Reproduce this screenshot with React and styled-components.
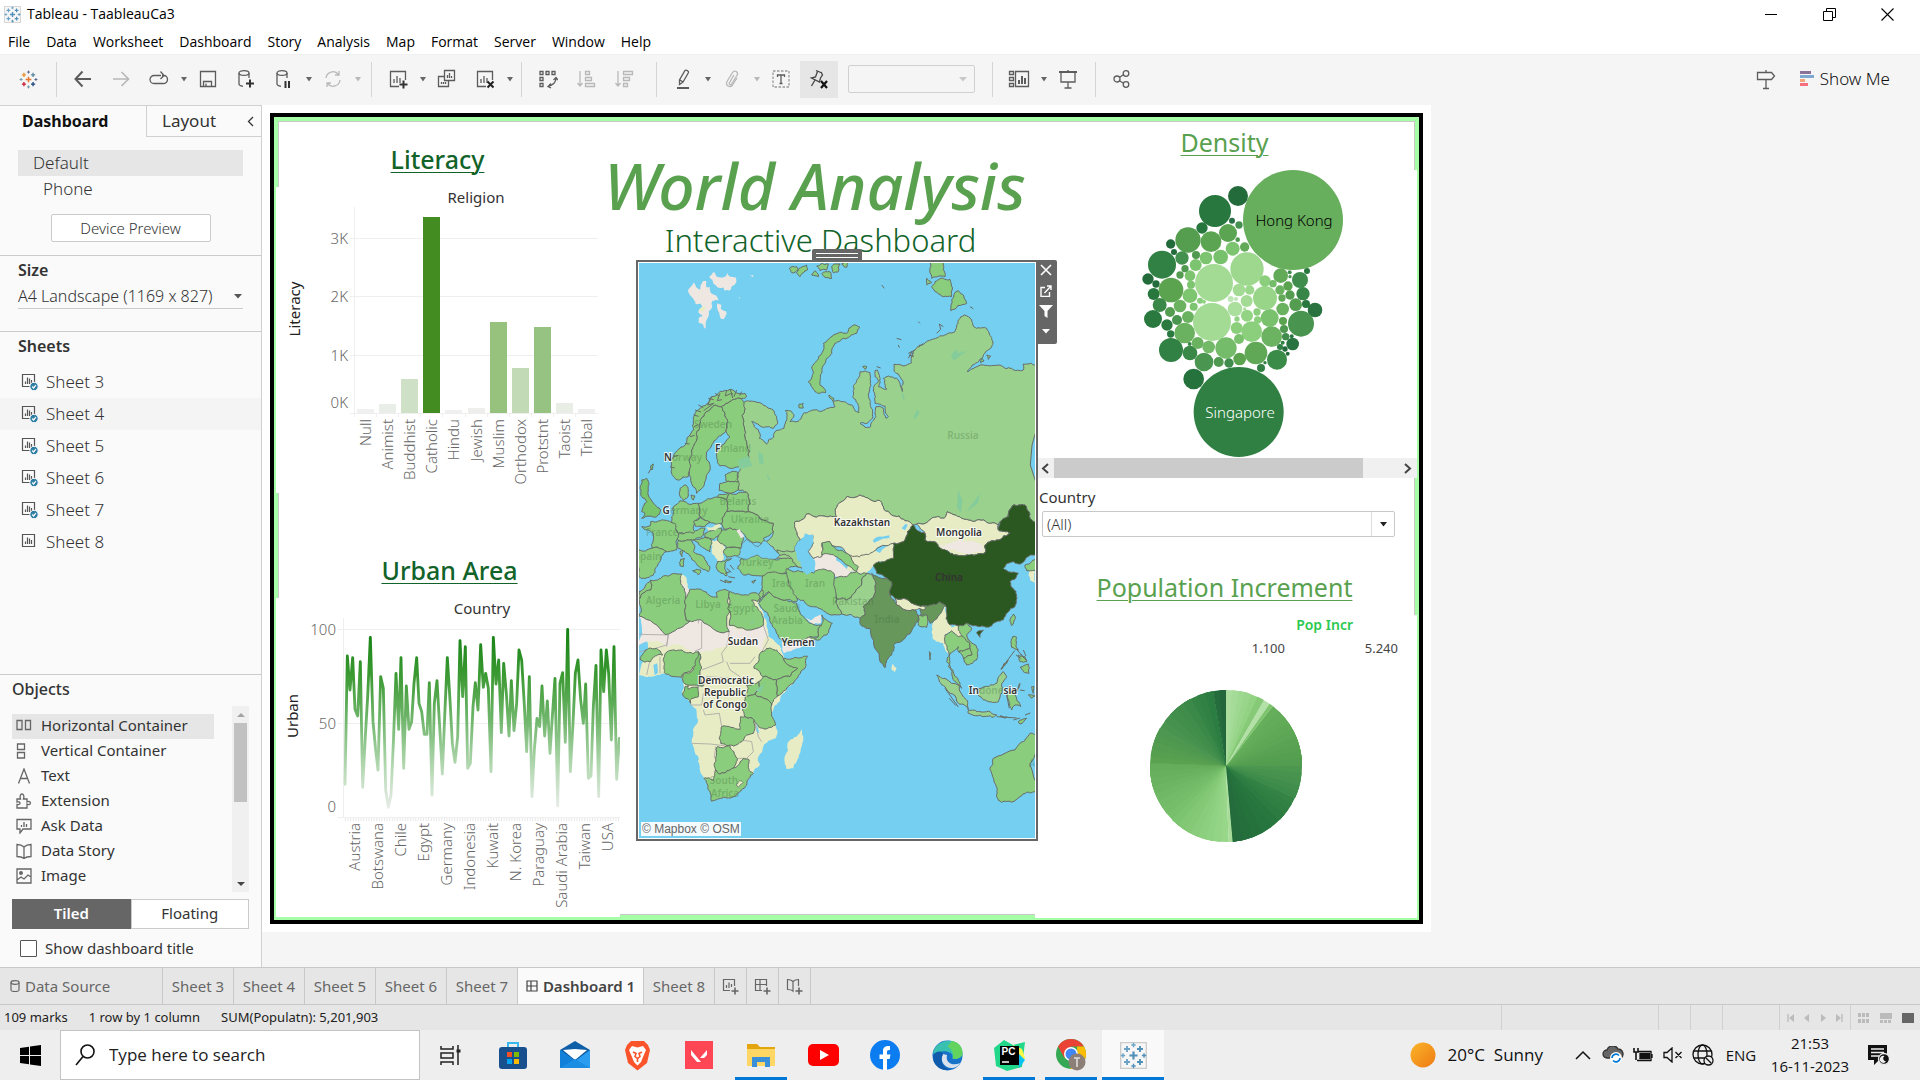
import React from "react";
import styled, { createGlobalStyle, css } from "styled-components";

const UI = `"Noto Sans", "Open Sans", sans-serif`;
const SYS = `"Open Sans", "Noto Sans", sans-serif`;

const GlobalStyle = createGlobalStyle`
  *, *::before, *::after { box-sizing: border-box; }
  body { margin: 0; background: #f5f5f5; font-family: ${UI}; color: #333; overflow: hidden; }
  button, select, input { font: inherit; color: inherit; }
  button { border: 0; padding: 0; background: none; cursor: pointer; }
  h1, h2, h3, p, ul { margin: 0; padding: 0; font-weight: 400; }
  svg { display: block; flex: none; }
`;

/* ---------- shell ---------- */
const Window = styled.div`
  display: flex;
  flex-direction: column;
  height: 100vh;
`;
const TitleBar = styled.header`
  display: flex;
  align-items: center;
  height: 28px;
  padding: 0 4px;
  background: #fff;
  color: #000;
  font: 14px/28px ${SYS};
`;
const TitleText = styled.h1`
  flex: 1;
  margin-left: 6px;
  font: inherit;
`;
const WindowButton = styled.button`
  width: 58px;
  height: 28px;
  display: grid;
  place-items: center;
`;
const MenuBar = styled.nav`
  display: flex;
  gap: 16px;
  height: 26px;
  padding-left: 8px;
  background: #fff;
`;
const MenuItem = styled.button`
  font: 14px/28px ${SYS};
  color: #000;
`;
const Toolbar = styled.div`
  display: flex;
  align-items: center;
  height: 51px;
  padding: 0 0 2px 9px;
  border-top: 1px solid #f0f0f0;
  background: #f5f5f5;
`;
const Tool = styled.button`
  width: 38px;
  height: 37px;
  display: grid;
  place-items: center;
  color: ${(p) => (p.$off ? "#b8b8b8" : "#5c5c5c")};
  background: ${(p) => (p.$on ? "#e6e6e6" : "transparent")};
`;
const CaretButton = styled.button`
  width: 11px;
  height: 37px;
  display: grid;
  place-items: center;
  color: ${(p) => (p.$off ? "#b8b8b8" : "#666")};
`;
const Separator = styled.span`
  width: 1px;
  height: 35px;
  margin-left: ${(p) => p.$before}px;
  margin-right: 7px;
  background: #d4d4d4;
`;
const SelectShell = styled.div`
  position: relative;
  width: ${(p) => (p.$width ? p.$width + "px" : "auto")};
  margin-left: ${(p) => p.$left || 0}px;
  svg { position: absolute; right: ${(p) => p.$inset || 6}px; top: 50%; margin-top: -2px; pointer-events: none; }
`;
const FitSelect = styled.select`
  appearance: none;
  width: 100%;
  height: 28px;
  border: 1px solid #d0d0d0;
  border-radius: 2px;
  background: #f5f5f5;
`;
const Spacer = styled.span`
  flex: 1;
`;
const ShowMe = styled.button`
  display: flex;
  align-items: center;
  gap: 6px;
  padding: 0 30px 0 15px;
  color: #111;
  font: 300 17px/24px ${UI};
`;
const Body = styled.div`
  display: flex;
  flex: 1;
  min-height: 0;
`;

/* ---------- side pane ---------- */
const Side = styled.aside`
  display: flex;
  flex-direction: column;
  width: 262px;
  border-right: 1px solid #d0d0d0;
  background: #fafafa;
`;
const SideTabs = styled.div`
  display: flex;
  height: 32px;
  border-top: 1px solid #d0d0d0;
`;
const SideTab = styled.button`
  width: ${(p) => (p.$active ? "146px" : "auto")};
  flex: ${(p) => (p.$active ? "none" : 1)};
  padding: 0 ${(p) => (p.$active ? 12 : 7)}px ${(p) => (p.$active ? 2 : 0)}px ${(p) => (p.$active ? 22 : 15)}px;
  display: flex;
  align-items: center;
  justify-content: space-between;
  font: ${(p) => (p.$active ? "700 16px" : "400 17px")}/28px ${UI};
  color: ${(p) => (p.$active ? "#111" : "#333")};
  ${(p) => !p.$active && css`border-left: 1px solid #d0d0d0; border-bottom: 1px solid #d0d0d0;`}
`;
const Devices = styled.section`
  padding: 13px 18px 12px;
  height: 118px;
`;
const Device = styled.button`
  display: block;
  width: 100%;
  height: 26px;
  padding-left: ${(p) => (p.$child ? 25 : 15)}px;
  text-align: left;
  font: 300 17px/26px ${UI};
  background: ${(p) => (p.$active ? "#e6e6e6" : "transparent")};
`;
const Preview = styled.button`
  display: block;
  width: 160px;
  height: 28px;
  margin: 12px auto 0;
  border: 1px solid #cbcbcb;
  border-radius: 2px;
  background: #fff;
  font: 300 15px/26px ${UI};
`;
const SizeBox = styled.section`
  height: 76px;
  padding: 1px 18px 0;
  border-top: 1px solid #cbcbcb;
`;
const Heading = styled.h2`
  font: 600 16px/26px ${UI};
  color: #333;
`;
const SizeSelect = styled.select`
  appearance: none;
  width: 100%;
  height: 26px;
  border: 0;
  border-bottom: 1px solid #cbcbcb;
  background: transparent;
  font: 300 16px/24px ${UI};
  padding: 0;
`;
const Sheets = styled.section`
  flex: 1;
  border-top: 1px solid #cbcbcb;
  ${Heading} { padding: 1px 18px 6px; height: 34px; }
`;
const SheetRow = styled.button`
  display: flex;
  align-items: center;
  gap: 7px;
  width: 100%;
  height: 32px;
  padding-left: 21px;
  font: 300 17px/32px ${UI};
  background: ${(p) => (p.$hover ? "#f4f4f4" : "transparent")};
`;
const Objects = styled.section`
  padding: 1px 12px 9px;
  border-top: 1px solid #cbcbcb;
  height: 293px;
  ${Heading} { font-weight: 500; }
`;
const ObjectPane = styled.div`
  display: flex;
  justify-content: space-between;
  height: 186px;
  margin-top: 4px;
`;
const ObjectList = styled.div`
  width: 202px;
  padding-top: 8px;
`;
const ObjectItem = styled.button`
  display: flex;
  align-items: center;
  gap: 9px;
  width: 100%;
  height: 25px;
  padding: 0 0 2px 4px;
  text-align: left;
  font: 400 15px/23px ${UI};
  color: #333;
  background: ${(p) => (p.$active ? "#e6e6e6" : "transparent")};
  svg { color: #666; }
`;
const VScroll = styled.div`
  display: flex;
  flex-direction: column;
  align-items: center;
  width: 17px;
  background: #f0f0f0;
  button { height: 17px; width: 17px; display: grid; place-items: center; }
  span { width: 13px; height: 79px; background: #c1c1c1; margin-bottom: auto; }
`;
const Modes = styled.div`
  display: flex;
  margin-top: 7px;
  height: 30px;
`;
const Mode = styled.button`
  flex: 1;
  padding-bottom: 3px;
  border: 1px solid ${(p) => (p.$active ? "#666" : "#cbcbcb")};
  background: ${(p) => (p.$active ? "#666" : "#fff")};
  color: ${(p) => (p.$active ? "#fff" : "#333")};
  font: ${(p) => (p.$active ? 600 : 400)} 15px/24px ${UI};
`;
const CheckRow = styled.label`
  display: flex;
  align-items: center;
  gap: 8px;
  margin: 7px 0 0 8px;
  height: 24px;
  font: 400 15px/24px ${UI};
  input { appearance: none; margin: 0; width: 17px; height: 17px; border: 1px solid #555; border-radius: 1px; background: #fff; }
`;

/* ---------- dashboard ---------- */
const Workspace = styled.main`
  flex: 1;
  min-width: 0;
  overflow: hidden;
`;
const Page = styled.div`
  width: 1169px;
  height: 827px;
  padding: 8px;
  background: #fff;
`;
const Frame = styled.div`
  height: 100%;
  border: 4px solid #000;
  background: #a6ffa6;
  padding-top: 4px;
`;
const Columns = styled.div`
  display: grid;
  grid-template-columns: 346px 415px 1fr;
  height: 100%;
`;
const Column = styled.div`
  display: flex;
  flex-direction: column;
  min-width: 0;
`;
const Tile = styled.section`
  height: ${(p) => p.$h}px;
  background: #fff;
  ${(p) => p.$edge === "left" && css`margin-left: ${p.$framed ? 4 : 2}px;`}
  ${(p) => p.$edge === "right" && css`margin-right: ${p.$framed ? 4 : 2}px;`}
  ${(p) => p.$framed && css`border-${p.$edge}: 1px solid #c8c8c8;`}
  ${(p) => p.$top && css`border-top: 1px solid #c8c8c8;`}
  padding-top: ${(p) => p.$pad || 0}px;
  padding-right: ${(p) => p.$right || 0}px;
`;
const Title = styled.h2`
  text-align: center;
  text-decoration: underline;
  text-decoration-thickness: 1px;
  text-underline-offset: 3px;
  font: ${(p) => (p.$dark ? 500 : 400)} 25px/36px ${UI};
  color: ${(p) => (p.$dark ? "#116329" : "#59a14f")};
`;
const Middle = styled.section`
  height: 794px;
  padding: 26px 0 0 16px;
  border-top: 1px solid #c8c8c8;
  border-bottom: 1px solid #c8c8c8;
  background: #fff;
`;
const Headline = styled.h1`
  font: italic 500 64px/76px ${UI};
  color: #59a14f;
  white-space: nowrap;
  margin-left: -32px;
`;
const Subtitle = styled.h2`
  height: 36px;
  font: 300 31px/32px ${UI};
  color: #116329;
  text-align: center;
  padding-right: 30px;
`;
const MapTile = styled.div`
  position: relative;
  z-index: 1;
  width: 402px;
  height: 581px;
  border: 2px solid #666;
  padding: 1px;
  background: #fff;
`;
const Grip = styled.div`
  position: absolute;
  left: 174px;
  top: -13px;
  width: 50px;
  height: 12px;
  padding: 4px;
  border-radius: 2px 2px 0 0;
  background: #666;
  &::before { content: ""; display: block; height: 5px; border: 1px solid #fff; border-width: 1px 0; }
`;
const MapTools = styled.div`
  position: absolute;
  left: 398px;
  top: -2px;
  width: 21px;
  height: 84px;
  padding: 0 2px 2px 0;
  background: #666;
  border-radius: 0 2px 2px 0;
  display: flex;
  flex-direction: column;
  color: #fff;
  button { flex: 1; display: grid; place-items: center; }
`;
const Credit = styled.p`
  position: absolute;
  left: 3px;
  bottom: 3px;
  padding: 0 1px;
  background: rgba(255, 255, 255, 0.92);
  color: #666;
  font: 12px/14px "Liberation Sans", Arial, sans-serif;
`;
const AxisText = styled.text`
  font: ${(p) => p.$weight || 300} ${(p) => p.$size || 15}px ${UI};
  fill: ${(p) => p.$fill || "#666"};
`;
const MapText = styled.text`
  font: 600 10px ${UI};
  fill: #333;
  text-anchor: middle;
`;
const MapLetters = styled.tspan`
  fill: ${(p) => (p.$faint ? "rgba(60,105,60,0.3)" : "#333")};
  ${(p) => !p.$faint && css`paint-order: stroke; stroke: rgba(255,255,255,.8); stroke-width: 2px;`}
`;
const HScroll = styled.div`
  display: flex;
  height: 20px;
  background: #f0f0f0;
  button { width: 19px; display: grid; place-items: center; color: #444; }
  span { width: 309px; background: #cbcbcb; margin-right: auto; }
`;
const FilterLabel = styled.label`
  display: block;
  padding-left: 4px;
  font: 400 15px/24px ${UI};
`;
const FilterShell = styled(SelectShell)`
  margin: 2px 0 32px 7px;
  width: 353px;
  height: 26px;
`;
const FilterSelect = styled.select`
  appearance: none;
  width: 100%;
  height: 26px;
  padding: 0 4px;
  border: 1px solid #c8c8c8;
  border-radius: 2px;
  background: linear-gradient(#ddd, #ddd) right 22px top / 1px 100% no-repeat #fff;
  font: 300 15px/24px ${UI};
`;

/* ---------- bottom bars ---------- */
const SheetTabs = styled.nav`
  display: flex;
  height: 37px;
  border-top: 1px solid #c8c8c8;
  background: #e6e6e6;
`;
const SheetTab = styled.button`
  display: flex;
  align-items: center;
  justify-content: ${(p) => (p.$start ? "flex-start" : "center")};
  gap: 5px;
  padding-left: ${(p) => (p.$start ? 10 : 0)}px;
  width: ${(p) => p.$w}px;
  border-right: 1px solid #c8c8c8;
  background: ${(p) => (p.$active ? "#fafafa" : "transparent")};
  font: ${(p) => (p.$active ? 600 : 400)} 15px/36px ${UI};
  color: ${(p) => (p.$active ? "#444" : "#666")};
`;
const Status = styled.footer`
  display: flex;
  height: 26px;
  padding-left: 4px;
  border-top: 1px solid #c8c8c8;
  background: #e6e6e6;
  font: 13px/25px ${UI};
  color: #222;
`;
const StatusText = styled.span`
  margin-right: 21px;
`;
const StatusCell = styled.span`
  display: flex;
  align-items: center;
  justify-content: center;
  gap: ${(p) => p.$gap || 8}px;
  width: ${(p) => p.$w}px;
  border-left: 1px solid #d0d0d0;
  color: #bbb;
`;
const Taskbar = styled.footer`
  display: flex;
  height: 50px;
  background: #eeeeef;
  color: #111;
  font-family: ${SYS};
`;
const StartButton = styled.button`
  width: 60px;
  display: grid;
  place-items: center;
`;
const Search = styled.label`
  display: flex;
  align-items: center;
  gap: 14px;
  width: 360px;
  padding-left: 14px;
  border: 1px solid #c4c4c4;
  background: #fff;
  input { width: 260px; border: 0; outline: 0; padding: 0; background: none; font: 17px/24px ${SYS}; }
  input::placeholder { color: #222; opacity: 1; }
`;
const TaskApp = styled.button`
  width: 62px;
  display: grid;
  place-items: center;
  background: ${(p) => (p.$active ? "#f9f9f9" : "transparent")};
  background-image: ${(p) => (p.$open ? "linear-gradient(#0078d7, #0078d7)" : "none")};
  background-size: ${(p) => (p.$active ? "100%" : "52px")} 3px;
  background-position: bottom center;
  background-repeat: no-repeat;
`;
const Tray = styled.div`
  display: flex;
  align-items: center;
  padding-right: 26px;
  font: 16px/24px ${SYS};
`;
const TrayButton = styled.button`
  width: 30px;
  height: 50px;
  display: grid;
  place-items: center;
`;
const Weather = styled.button`
  display: flex;
  align-items: center;
  gap: 12px;
  margin-right: 25px;
  font: 17px/24px ${SYS};
  white-space: pre;
`;
const Lang = styled.span`
  width: 46px;
  text-align: center;
  font: 15px/24px ${SYS};
`;
const Clock = styled.time`
  width: 92px;
  margin-right: 8px;
  text-align: center;
  font: 15px/23px ${SYS};
`;

/* ---------- icons ---------- */
const Ico = ({ w = 20, h = 20, sw = 1.3, children, ...rest }) => (
  <svg width={w} height={h} viewBox={`0 0 ${w} ${h}`} fill="none" stroke="currentColor" strokeWidth={sw} aria-hidden="true" {...rest}>{children}</svg>
);
const Down = ({ s = 6, color = "currentColor" }) => (
  <svg width={s} height={5} viewBox="0 0 6 5" aria-hidden="true" preserveAspectRatio="none"><path d="M0 0h6L3 4.4z" fill={color} /></svg>
);
const plusPath = (x, y, r) => `M${x - r} ${y}H${x + r}M${x} ${y - r}V${y + r}`;
const TableauMark = ({ size = 18, blue, boxed }) => {
  const c = blue
    ? ["#4f8fb8", "#4f8fb8", "#6aa3c7", "#6aa3c7", "#4f8fb8", "#6aa3c7", "#4f8fb8", "#6aa3c7", "#4f8fb8"]
    : ["#e8762c", "#59879b", "#c72035", "#eb912c", "#1f447e", "#5b6591", "#7099a5", "#7099a5", "#5b6591"];
  return (
    <svg width={size} height={size} viewBox="0 0 20 20" fill="none" aria-hidden="true">
      {boxed && <path d="M.5.5h19v19H.5z" fill="#f6f6f6" stroke="#ccc" />}
      <path d={plusPath(10, 10, 3)} stroke={c[0]} strokeWidth="1.6" />
      <path d={plusPath(14.8, 5.2, 2.2)} stroke={c[1]} strokeWidth="1.4" />
      <path d={plusPath(5.2, 14.8, 2.2)} stroke={c[2]} strokeWidth="1.4" />
      <path d={plusPath(5.2, 5.2, 2.2)} stroke={c[3]} strokeWidth="1.4" />
      <path d={plusPath(14.8, 14.8, 2.2)} stroke={c[4]} strokeWidth="1.4" />
      <path d={plusPath(10, 2.2, 1.6)} stroke={c[5]} />
      <path d={plusPath(10, 17.8, 1.6)} stroke={c[6]} />
      <path d={plusPath(2.2, 10, 1.6)} stroke={c[7]} />
      <path d={plusPath(17.8, 10, 1.6)} stroke={c[8]} />
    </svg>
  );
};
const icons = {
  back: <Ico sw={2}><path d="M18 10H3M9.500 2.500 2.500 10l7 7.500" /></Ico>,
  forward: <Ico sw={1.7}><path d="M2 10h15M10.500 3l7 7-7 7" /></Ico>,
  redo: <Ico><path d="M12 6.500H5a4 4 0 0 0 0 8h9a4 4 0 0 0 4.500-4c0-2-1.500-4-3.500-4h-2M11.500 2.500 15 6.500l-3.500 3.500" /></Ico>,
  save: <Ico><path d="M2.500 2.500h15v15h-15zM5.500 17.500v-5h8v5M8 17.500v-3" /></Ico>,
  dbPlus: <Ico><ellipse cx="8" cy="4" rx="5" ry="2.400" /><path d="M3 4v11c0 1.300 2 2 4 2.300M13 4v5" /><path d="M10 14.500h8M14 10.500v8" strokeWidth="2" stroke="#333" /></Ico>,
  dbPause: <Ico><ellipse cx="8" cy="4" rx="5" ry="2.400" /><path d="M3 4v11c0 1.300 2 2 4 2.300M13 4v5" /><path d="M11.500 12v7M15 12v7" strokeWidth="2" stroke="#333" /></Ico>,
  refresh: <Ico><path d="M3 9a7 7 0 0 1 12.500-3.500M17 11a7 7 0 0 1-12.500 3.500M16 2v4h-4M4 18v-4h4" /></Ico>,
  newSheet: <Ico><path d="M11 17.500H2.500v-15h15V11M6 14v-4M9 14V7M12 14V9" /><path d="M11.500 15.500h8M15.500 11.500v8" strokeWidth="2" stroke="#333" /></Ico>,
  dup: <Ico><path d="M7.500 1.500h10v10h-10zM7.500 7.500h-6v10h10v-6M10.500 9V6M12.500 9V4M14.500 9V7M4.500 15v-2M6.500 15v-2M8.500 15v-2" /></Ico>,
  clear: <Ico><path d="M11 17.500H2.500v-15h15V11M6 14v-4M9 14V7M12 14V9" /><path d="m12.500 12.500 6 6M18.500 12.500l-6 6" strokeWidth="2" stroke="#222" /></Ico>,
  swap: <Ico><path d="M2 2.500h3v3H2zM8 2.500h3v3H8zM14 2.500h3v3h-3zM2 8.500h3v3H2zM2 14.500h3v3H2zM18 9c0 5-3 7-8 8.500M15.500 11 18 8.500l2 2.500M13 14.500l-3 3 3 1.500" /></Ico>,
  sortAsc: <Ico><path d="M4 2v15M1.500 14 4 17l2.500-3M9.500 2.500h4v3h-4zM9.500 8.500h6v3h-6zM9.500 14.500h9v3h-9z" /></Ico>,
  sortDesc: <Ico><path d="M4 2v15M1.500 14 4 17l2.500-3M9.500 2.500h9v3h-9zM9.500 8.500h6v3h-6zM9.500 14.500h4v3h-4z" /></Ico>,
  marker: <Ico w={20} h={22}><path d="M12 2.500c1-1 4 .5 3.500 2L10 14l-3.500 2.500L6.500 12zM7 12l3 2" /><path d="M4 20h12" strokeWidth="2" /></Ico>,
  clip: <Ico><path d="M12 6l-4.500 7.500c-1 2 1 3 2 1.500L15 6.500c2-3.500-2.500-6-4.500-3L5 12.500c-2 4 3 7 5.500 3.500L15 9" /></Ico>,
  text: <Ico><rect x="2" y="2" width="16" height="16" strokeDasharray="2.500 1.500" stroke="#999" /><path d="M6.500 8V6h7v2M10 6v8.500M8.500 14.500h3" /></Ico>,
  pin: <Ico w={22} h={22}><path d="M8 2.500 14 5M9.500 3.500 7.500 9 3.500 10l8 4 1-4 2-3-1.500-3M7 12l-3.500 6" stroke="#444" /><path d="m13 13 6 7M19 13l-6 7" strokeWidth="2.200" stroke="#111" /></Ico>,
  cards: <Ico w={22}><path d="M1.500 2.500h4v3h-4zM1.500 8.500h4v3h-4zM1.500 14.500h4v3h-4zM7.500 2.500h13v15h-13z" /><path d="M11 15v-4M14 15V7M17 15v-6" strokeWidth="2" /></Ico>,
  present: <Ico><path d="M1 3h18" strokeWidth="2" /><path d="M3 3v10h14V3M10 13v6M6.500 19h7M10 3V1" /></Ico>,
  share: <Ico><circle cx="5" cy="10" r="3" /><circle cx="14" cy="4.500" r="2.800" /><circle cx="14" cy="15.500" r="2.800" /><path d="m7.500 8.300 4-2.500M7.500 11.700l4 2.500" /></Ico>,
  sign: <Ico w={20} h={22}><path d="M1.500 4.500h14l3 3.500-3 3.500h-14zM10 2v2.500M10 11.500V20M7 20.500h6" /></Ico>,
};
const SheetIcon = ({ used }) => (
  <Ico w={18} h={18} sw={1.2}>
    <path d="M1.500 1.500h12v12h-12z" stroke="#555" /><path d="M4.500 11V8.500M6.500 11V4.500M8.500 11V5.500M10.500 11V7" stroke="#555" />
    {used && <><circle cx="13" cy="13.500" r="4.200" fill="#2f7fa5" stroke="#fafafa" strokeWidth="1" /><path d="m11.200 13.500 1.400 1.500 2.300-2.800" stroke="#fff" /></>}
  </Ico>
);
const objectIcons = {
  "Horizontal Container": <Ico w={16} h={16}><path d="M1 2.500h5v9H1zM9.500 2.500h5v9h-5z" /></Ico>,
  "Vertical Container": <Ico w={16} h={16}><path d="M1.500 1h7v5.500h-7zM1.500 9.500h7V15h-7z" /></Ico>,
  Text: <Ico w={16} h={16}><path d="M2.500 15.500 8 1l5.500 14.500M4.500 10.500h7" /></Ico>,
  Extension: <Ico w={16} h={16}><path d="M1 6h3.500C3.500 3 4.500 1 6 1s2.500 2 1.500 5H11v3c2-1 3.500-.5 3.500 1s-1.500 2-3.500 1v4H1v-3.500c2.500.5 3-.5 3-1.500s-1-1.500-3-1z" /></Ico>,
  "Ask Data": <Ico w={16} h={16}><path d="M1 1.500h14V11H7l-3 4v-4H1zM5.500 9V7M8 9V4M10.500 9V6" /></Ico>,
  "Data Story": <Ico w={16} h={16}><path d="M8 4C6 2 3.500 1.500 1 1.500v12c2.500 0 5 .3 7 2 2-1.700 4.500-2 7-2v-12c-2.500 0-5 .5-7 2.500zM8 4v11" /></Ico>,
  Image: <Ico w={16} h={16}><path d="M1 1h14v14H1zM1 12l4-3 3 2 4-4 3 2" /><circle cx="5" cy="5" r="1.300" fill="currentColor" /></Ico>,
};

/* ---------- charts ---------- */
const religions = [
  ["Null", 357, 409, "#f0f0f0"], ["Animist", 379, 404, "#e9eee8"], ["Buddhist", 401, 379, "#cee1c6"],
  ["Catholic", 423, 217, "#438c22"], ["Hindu", 445, 410, "#f0f0f0"], ["Jewish", 468, 408, "#eeefed"],
  ["Muslim", 490, 322, "#96c27e"], ["Orthodox", 512, 368, "#c3dab7"], ["Protstnt", 534, 327, "#96c381"],
  ["Taoist", 556, 403, "#e8ede6"], ["Tribal", 578, 409, "#efefef"],
];
const LiteracyChart = () => (
  <svg width="344" height="306" viewBox="276 187 344 306" role="img" aria-label="Literacy by religion">
    <AxisText x="476" y="203" textAnchor="middle" $weight={400} $size={15} $fill="#333">Religion</AxisText>
    <AxisText transform="translate(300 309) rotate(-90)" textAnchor="middle" $weight={400} $size={15} $fill="#222">Literacy</AxisText>
    <path d="M354.500 207V415M350 238.500H598M350 296.500H598M350 355.500H598M350 413.500H598" stroke="#efefef" fill="none" />
    {["3K", "2K", "1K", "0K"].map((t, i) => (
      <AxisText key={t} x="348" y={[244, 302, 361, 408][i]} textAnchor="end">{t}</AxisText>
    ))}
    {religions.map(([n, x, y, c]) => (
      <g key={n}>
        <rect x={x} y={y} width="17" height={413 - y} fill={c} />
        <path d={`M${x - 2.5} 413v4`} stroke="#efefef" />
        <AxisText transform={`translate(${x + 14} 419) rotate(-90)`} textAnchor="end">{n}</AxisText>
      </g>
    ))}
  </svg>
);
const urbanLine = "225,703 232,318 240,420 248,323 255,478 263,498 271,335 278,712 286,560 293,440 301,262 309,515 317,600 324,660 332,380 340,415 347,720 355,772 363,735 370,580 378,370 386,538 393,323 401,655 409,408 417,538 425,515 432,400 440,323 447,460 455,485 463,553 471,553 478,398 486,735 493,460 501,392 509,530 517,672 524,500 532,323 540,450 547,580 555,637 563,560 570,272 578,440 586,290 593,655 601,640 609,470 616,398 624,480 632,284 640,412 647,370 655,415 663,665 670,262 678,402 686,330 694,548 701,340 709,430 717,558 724,392 732,542 740,460 747,300 755,330 763,465 770,605 778,380 786,740 793,600 801,505 809,530 816,408 824,558 832,453 840,610 847,500 855,385 863,768 870,400 878,368 886,577 893,238 901,665 909,520 916,370 924,330 932,450 940,520 947,402 955,685 963,678 970,470 978,346 986,740 993,300 1001,425 1009,300 1016,370 1024,570 1032,290 1040,688 1048,565";
const countries = ["Austria", "Botswana", "Chile", "Egypt", "Germany", "Indonesia", "Kuwait", "N. Korea", "Paraguay", "Saudi Arabia", "Taiwan", "USA"];
const UrbanChart = () => (
  <svg width="344" height="319" viewBox="276 598 344 319" role="img" aria-label="Urban population by country">
    <defs>
      <linearGradient id="urban" gradientUnits="userSpaceOnUse" x1="0" y1="238" x2="0" y2="790">
        <stop offset="0" stopColor="#138013" /><stop offset=".25" stopColor="#3c9a33" /><stop offset=".5" stopColor="#72b76e" />
        <stop offset=".75" stopColor="#b4d8b2" /><stop offset="1" stopColor="#efefef" />
      </linearGradient>
    </defs>
    <AxisText x="482" y="614" textAnchor="middle" $weight={400} $size={15} $fill="#333">Country</AxisText>
    <AxisText transform="translate(298 716) rotate(-90)" textAnchor="middle" $weight={400} $size={15} $fill="#222">Urban</AxisText>
    <path d="M343.500 618V817M338 629.500H620M338 723.500H620M338 817.500H620" stroke="#efefef" fill="none" />
    <path d="M345 819.500H620" stroke="#e8e8e8" strokeWidth="3" strokeDasharray="1 1.600" />
    {["100", "50", "0"].map((t, i) => (
      <AxisText key={t} x="336" y={[635, 729, 812][i]} textAnchor="end">{t}</AxisText>
    ))}
    <g transform="translate(270 550) scale(.333333)">
      <polyline points={urbanLine} fill="none" stroke="url(#urban)" strokeWidth="8.500" strokeLinejoin="round" strokeLinecap="round" />
    </g>
    {countries.map((n, i) => (
      <AxisText key={n} transform={`translate(${360 + i * 23} 823) rotate(-90)`} textAnchor="end">{n}</AxisText>
    ))}
  </svg>
);

const bubbles = [
  [789, 270, 150, "#67ae5d"], [626, 846, 135, "#2f8042"], [555, 243, 48, "#28773e"], [624, 198, 30, "#246b3c"], [516, 294, 17, "#27763e"],
  [606, 272, 9, "#2a6f45"], [627, 285, 11, "#44904f"], [594, 309, 27, "#5ba451"], [543, 335, 31, "#5ba451"], [474, 330, 38, "#559e50"],
  [623, 329, 7, "#4f9a50"], [422, 342, 14, "#246b3c"], [432, 366, 9, "#246b3c"], [456, 384, 20, "#44904f"], [498, 375, 12, "#4f9a50"],
  [608, 356, 21, "#7cc46f"], [644, 351, 14, "#62a958"], [396, 404, 42, "#308143"], [528, 384, 19, "#7cc46f"], [572, 381, 22, "#78c16c"],
  [497, 405, 18, "#7cc46f"], [465, 416, 11, "#4f9a50"], [450, 435, 11, "#539c50"], [480, 437, 16, "#7cc46f"], [651, 417, 50, "#9ed88f"],
  [552, 459, 57, "#a3db95"], [354, 447, 17, "#246b3c"], [378, 462, 11, "#246b3c"], [371, 492, 18, "#28773e"], [423, 480, 37, "#5ba34f"],
  [480, 497, 22, "#7dc56f"], [483, 464, 12, "#7dc56f"], [389, 525, 21, "#3a8848"], [450, 528, 19, "#6ab260"], [491, 530, 12, "#7cc46f"],
  [510, 512, 9, "#88cb7b"], [522, 515, 6, "#92d384"], [420, 546, 15, "#539c50"], [369, 567, 27, "#2a7a40"], [411, 585, 17, "#2a7a40"], [441, 570, 15, "#4a9550"],
  [474, 561, 18, "#6ab260"], [546, 576, 57, "#a3db95"], [464, 609, 31, "#6ab260"], [422, 612, 11, "#2a7a40"], [423, 660, 36, "#308143"],
  [480, 669, 22, "#3a8848"], [503, 639, 18, "#6ab260"], [479, 642, 6, "#3a8848"], [536, 651, 19, "#72b968"], [588, 654, 32, "#75bc6a"],
  [522, 696, 28, "#4a9550"], [566, 696, 15, "#4f9850"], [597, 699, 14, "#3f8c4c"], [629, 687, 19, "#5ba34f"], [678, 669, 34, "#60a856"],
  [491, 747, 31, "#26723d"], [693, 714, 12, "#308143"], [705, 698, 5, "#308143"], [741, 689, 30, "#3a8b48"], [725, 620, 31, "#6bb361"],
  [665, 605, 31, "#8bcf7d"], [627, 627, 15, "#7ac16e"], [620, 594, 18, "#8bcf7d"], [719, 564, 27, "#7ac16e"], [651, 557, 18, "#92d384"],
  [615, 537, 22, "#abdf9e"], [650, 513, 18, "#a3db95"], [705, 504, 36, "#98d589"], [627, 480, 19, "#a3db95"], [659, 480, 14, "#9ad78b"],
  [602, 507, 9, "#bfe6b5"], [618, 507, 6, "#bfe6b5"], [705, 453, 17, "#8bcf7d"], [729, 461, 11, "#75bc6a"], [752, 437, 22, "#62aa58"],
  [779, 427, 6, "#3f8c4c"], [780, 440, 5, "#4a9550"], [831, 423, 9, "#28773e"], [810, 450, 24, "#3f8c4c"], [774, 468, 14, "#5ba34f"],
  [750, 480, 14, "#6ab260"], [780, 495, 14, "#539c50"], [756, 504, 11, "#62aa58"], [819, 491, 20, "#378648"], [828, 522, 12, "#28773e"],
  [797, 524, 19, "#539c50"], [758, 537, 19, "#6ab260"], [855, 540, 22, "#28733f"], [813, 581, 39, "#49954f"], [759, 573, 12, "#5ba34f"],
  [762, 597, 12, "#4f9850"], [767, 620, 11, "#3f8c4c"], [785, 619, 6, "#28773e"], [788, 642, 19, "#28733f"], [758, 638, 6, "#308143"],
  [750, 651, 9, "#308143"], [765, 657, 8, "#246b3c"], [773, 671, 6, "#246b3c"], [681, 546, 11, "#8bcf7d"], [683, 570, 11, "#8bcf7d"],
  [621, 567, 8, "#92d384"], [644, 537, 5, "#abdf9e"],
];
const DensityChart = () => (
  <svg width="382" height="288" viewBox="1035 170 382 288" role="img" aria-label="Density by country">
    <g transform="translate(1030 130) scale(.333333)">
      {bubbles.map(([x, y, r, c]) => <circle key={`${x}-${y}`} cx={x} cy={y} r={r} fill={c} />)}
    </g>
    <AxisText x="1294" y="226" textAnchor="middle" $size={15} $fill="#000">Hong Kong</AxisText>
    <AxisText x="1240" y="418" textAnchor="middle" $size={15} $fill="#fff">Singapore</AxisText>
  </svg>
);

const pieBands = [
  [0, 19, "#abdd9e", "#99d68b", 4], [19, 30, "#92d283", "#86ca78", 2], [30, 35, "#b2e0a7", "#b2e0a7", 1], [35, 38, "#7cc46c", "#6fb864", 1],
  [38, 90, "#65ae5a", "#539d50", 9], [90, 115, "#4c9750", "#3d8b4a", 5], [115, 135, "#358446", "#2c7c41", 4], [135, 175, "#27773e", "#246c3c", 5],
  [175, 178, "#a9dc9b", "#b5e1ab", 1], [178, 225, "#98d78a", "#7dc470", 8], [225, 272, "#79c06d", "#65ad5b", 8], [272, 300, "#5aa250", "#4d9750", 5],
  [300, 332, "#49944f", "#3b8949", 5], [332, 350, "#348445", "#2c7d41", 3], [350, 360, "#256d3d", "#24663b", 2],
];
const mix = (a, b, t) => "#" + [1, 3, 5].map((i) => {
  const p = parseInt(a.slice(i, i + 2), 16), q = parseInt(b.slice(i, i + 2), 16);
  return Math.round(p + (q - p) * t).toString(16).padStart(2, "0");
}).join("");
const slices = pieBands.flatMap(([from, to, a, b, n]) =>
  Array.from({ length: n }, (_, i) => ({ from: from + ((to - from) * i) / n, to, color: mix(a, b, n > 1 ? i / (n - 1) : 0) })));
const PopulationChart = () => {
  const cx = 1226, cy = 766, r = 76;
  const at = (deg) => [cx + r * Math.sin((deg * Math.PI) / 180), cy - r * Math.cos((deg * Math.PI) / 180)].map((v) => v.toFixed(2)).join(" ");
  return (
    <svg width="382" height="303" viewBox="1035 615 382 303" role="img" aria-label="Population increment">
      <AxisText x="1353" y="630" textAnchor="end" $weight={600} $size={14} $fill="#2bc94f">Pop Incr</AxisText>
      <AxisText x="1285" y="653" textAnchor="end" $weight={400} $size={13} $fill="#444">1.100</AxisText>
      <AxisText x="1398" y="653" textAnchor="end" $weight={400} $size={13} $fill="#444">5.240</AxisText>
      {slices.map((s) => <path key={s.from} fill={s.color} d={`M${cx} ${cy}L${at(s.from)}A${r} ${r} 0 0 1 ${at(s.to)}z`} />)}
    </svg>
  );
};

/* ---------- map ---------- */
const low = (s) => s.trim().split(/\s+/).map((p) => { const [x, y] = p.split(",").map(Number); return `${x},${y + 870}`; }).join(" ");
/* Coast lines get their small bays from a midpoint shift. It depends on the two ends only,
   so a border shared by two countries keeps one shape. */
const coast = (s, amp = 0.16, depth = 3) => {
  const pts = s.trim().split(/\s+/).map((p) => p.split(",").map(Number));
  const split = (a, b, d) => {
    const len = Math.hypot(b[0] - a[0], b[1] - a[1]);
    if (d === 0 || len < 7) return [a];
    const flip = a[0] > b[0] || (a[0] === b[0] && a[1] > b[1]);
    const [p, q] = flip ? [b, a] : [a, b];
    const seed = Math.sin(p[0] * 12.9898 + p[1] * 78.233 + q[0] * 37.719 + q[1] * 4.581) * 43758.5453;
    const k = (seed - Math.floor(seed) - 0.5) * amp * 2;
    const m = [(p[0] + q[0]) / 2 - (q[1] - p[1]) * k, (p[1] + q[1]) / 2 + (q[0] - p[0]) * k];
    return [...split(a, m, d - 1), ...split(m, b, d - 1)];
  };
  return "M" + pts.flatMap((p, i) => split(p, pts[(i + 1) % pts.length], depth)).map((p) => p.map((v) => v.toFixed(1)).join(" ")).join("L") + "z";
};
const G = "#8acd7d", R = "#9ad18d", CREAM = "#e7ecc5", SAND = "#efe8e2";
const bare = [
  [CREAM, low("27,155 62,120 100,108 155,102 168,110 172,130 178,150 195,148 215,150 240,168 262,172 258,158 285,148 305,160 335,165 375,158 390,170 385,190 400,230 410,260 415,290 435,305 455,335 460,355 495,352 532,348 525,385 490,430 455,465 432,500 425,520 437,555 437,595 400,620 385,650 390,675 370,700 350,735 320,765 280,772 245,784 235,750 222,715 210,680 205,650 185,610 190,580 202,550 195,505 180,485 158,465 162,440 155,412 105,402 60,410 27,405")],
  [SAND, low("27,228 105,283 180,243 215,240 290,275 298,256 405,256 410,290 400,330 340,300 250,330 200,335 110,320 27,315")],
  [SAND, low("152,130 168,140 178,150 168,170 155,150")],
  [CREAM, low("515,568 520,590 510,640 490,685 468,685 463,655 475,605 500,590")],
  [SAND, "238,82 252,66 258,78 285,80 292,68 300,80 316,82 318,98 306,108 300,122 284,122 280,112 262,112 250,100"],
  [SAND, "175,118 190,98 198,112 210,120 218,94 228,92 230,112 240,110 242,128 262,142 266,150 248,152 246,172 236,184 232,206 226,236 218,222 206,218 206,206 218,198 204,186 218,176 212,160 196,162 190,146 182,138"],
  [SAND, "262,160 274,164 272,176 288,184 290,192 282,208 270,202 266,186"], [SAND, "360,78 370,75 370,81"], [SAND, "326,142 330,142 328,146"],
  [CREAM, "204,182 216,170 228,172 220,186"],
  [SAND, low("455,305 478,310 540,288 545,305 500,325 462,340")],
  [SAND, low("525,235 545,240 575,222 572,250 545,252")],
  [CREAM, low("787,372 800,385 795,398 785,390")],
  [CREAM, low("915,240 945,197 950,240 965,262 985,255 1005,275 1020,320 1005,310 985,290 960,275 945,285 955,350 940,310 918,305 905,275")],
  [CREAM, low("1200,90 1215,95 1215,128 1200,120")],
  [SAND, low("560,50 610,40 680,95 712,95 650,115 590,92 555,95 545,65")],
  [CREAM, "650,900 700,910 790,880 790,925 735,945 700,975 650,960"],
  [CREAM, "240,870 275,868 280,930 262,935 245,910"],
];
const lands = [
  [R, "330,462 345,455 375,455 410,470 440,500 443,520 430,535 400,532 365,515 385,540 388,565 410,583 415,570 430,562 435,545 462,535 470,510 466,482 485,485 492,498 480,515 500,515 520,490 550,480 590,475 615,470 608,452 640,455 665,465 687,488 683,460 668,440 670,410 685,385 690,365 720,368 722,395 716,440 722,470 728,490 712,520 690,520 705,532 722,530 738,500 738,470 760,475 768,505 775,500 765,468 735,460 730,420 745,395 735,362 742,360 750,395 745,410 770,418 760,385 775,378 800,385 817,425 820,395 805,372 792,360 792,343 845,338 850,305 890,275 925,262 955,250 975,245 985,210 1003,195 1025,210 1040,235 1070,235 1085,262 1085,290 1055,325 1020,355 1012,365 1060,345 1110,345 1145,355 1180,360 1180,342 1225,350 1225,820 1205,810 1185,765 1150,765 1135,800 1110,815 1105,825 1060,810 1010,808 975,795 952,785 942,805 905,805 860,822 850,825 825,812 785,795 750,752 735,755 690,735 622,765 620,800 590,800 530,792 495,815 500,845 512,870 495,890 500,925 515,950 490,935 440,925 450,915 420,885 400,880 430,845 430,820 355,785 360,760 350,727 325,720 325,668 345,640 358,605 350,575 340,520 345,475"],
  ["#e7ecc5", "495,815 530,792 590,800 620,800 622,765 690,735 735,755 750,752 785,795 825,812 850,825 825,870 790,880 730,905 700,915 650,910 600,880 575,880 575,920 550,925 535,905 550,880 548,855 512,870 500,845"],
  [CREAM, "860,822 905,805 942,805 952,785 975,795 1010,808 1060,810 1105,825 1105,840 1140,850 1105,870 1065,885 1065,908 1010,915 960,910 925,890 920,880 885,870 885,850"],
  [G, "587,428 555,425 535,395 550,370 545,350 575,310 580,280 610,255 650,250 670,225 690,232 680,250 640,265 610,290 590,325 575,370 570,405"],
  [G, "900,36 940,36 945,80 905,85"], [G, "915,95 930,85 960,88 965,140 940,140 905,110"], [G, "985,122 1010,160 962,182"],
  [G, "478,55 500,50 505,62 485,68"], [G, "500,68 530,45 532,60 510,80"], [G, "545,75 555,62 565,80"], [G, "560,48 595,42 590,60 570,62"], [G, "575,72 600,65 605,85 585,82"], [G, "605,50 630,42 625,65 610,68"], [G, "635,42 655,38 650,52"],
  [G, "508,462 520,460 520,474 508,474"], [G, "597,435 612,445 608,452"], [G, "698,350 710,350 706,358"], [G, "890,85 905,98 890,105"], [G, "1070,315 1082,318 1075,328"], [G, "1055,325 1062,333 1052,338"],
  [G, "300,418 345,430 350,440 330,445 300,455 275,470 255,465 225,490 210,520 200,570 185,600 185,650 175,680 145,690 125,670 120,630 160,590 190,540 195,490 215,470 245,440"],
  [G, "225,490 255,465 275,470 285,490 288,540 265,560 235,600 240,660 220,710 200,730 185,700 178,665 185,600 200,570 210,520"],
  [G, "300,455 330,445 345,475 340,520 350,575 358,605 345,640 310,655 270,648 262,600 300,560 288,540 285,490 275,470"],
  [G, "150,715 168,705 175,735 160,752 150,740"], [G, "183,735 195,738 190,750"],
  [G, "285,675 325,668 325,695 290,695"], [G, "270,700 290,695 325,695 325,720 300,730 268,722"], [G, "265,735 300,730 290,750 265,745"],
  [G, "300,730 350,727 360,760 355,785 290,785 290,750"],
  [G, "205,760 265,742 290,750 290,785 275,822 235,815 210,800"],
  [G, "130,770 150,752 165,755 205,760 210,800 190,830 195,850 145,850 125,800"],
  [G, "190,815 210,802 240,818 225,830 195,828"], [G, "145,850 190,850 225,835 220,855 185,870 145,872"],
  [G, "290,785 355,785 430,820 430,845 400,865 410,880 350,865 325,840 280,835 275,822"],
  [G, "225,850 275,835 275,855 250,868 225,862"], [G, "275,840 320,840 340,870 335,895 290,895 262,870"],
  [G, "285,897 335,895 325,920 290,922 280,905"], [G, "190,870 225,862 245,870 240,905 215,890"],
  [G, "35,830 60,828 62,815 100,810 135,820 145,850 140,900 110,905 65,895 70,850"],
  [G, "27,900 65,895 110,905 85,940 70,975 35,985 27,980"],
  ["#79c56c", "35,690 50,685 55,720 80,770 92,780 80,800 35,805 45,790 35,785 50,755 35,740 30,715"], ["#79c56c", "62,648 70,642 66,660"],
  [G, "145,872 185,870 195,890 190,905 240,950 235,965 215,955 195,935 165,905 145,895"], [G, "188,962 212,960 205,975"], [G, "152,928 163,925 160,950 150,948"], [G, "150,905 158,900 156,920"],
  [G, "262,935 305,925 285,940 290,978 268,965 258,950"], [G, "285,990 305,995 285,997"], [G, low("365,125 378,120 370,130")],
  [G, low("330,60 380,45 440,60 485,55 510,80 475,85 475,100 400,108 340,105 322,85")],
  [R, low("440,30 500,30 520,60 515,85 485,55 450,45")],
  [G, low("398,108 450,100 475,100 490,150 500,185 470,180 415,155 390,180 395,150")], [G, low("385,170 398,150 400,165 388,190")],
  [G, low("385,190 415,155 470,180 500,190 520,230 540,250 575,255 565,290 520,300 478,310 455,300 440,280 420,245 400,210")],
  [G, low("575,225 607,250 590,285 545,305 538,290 565,290 575,255")],
  [G, low("470,85 490,95 520,95 550,100 575,88 612,100 618,140 620,178 635,222 585,215 550,200 520,180 500,175 485,145 475,120")],
  [G, low("575,10 600,5 620,30 650,40 665,60 685,80 680,95 620,50 575,45")],
  [G, low("612,118 650,110 680,95 712,100 690,140 650,180 620,178")],
  [R, low("620,178 650,180 690,140 712,100 738,130 735,160 700,200 705,225 690,235 635,222")],
  ["#67975a", low("725,100 785,125 780,165 800,195 855,210 865,240 850,262 790,315 785,345 765,383 750,365 722,280 720,265 695,258 690,235 705,225 700,200 735,160 738,130")],
  ["#67975a", low("870,210 930,185 945,197 915,240 900,250 890,225 872,225")],
  [CREAM, low("795,175 860,195 885,200 885,208 855,210 800,195")], [G, low("862,225 890,225 893,250 890,262 865,255")],
  ["#2b5720", low("790,10 825,0 850,-45 885,-20 885,0 920,10 925,20 960,40 1010,45 1065,38 1065,15 1105,0 1140,-20 1105,-30 1110,-55 1135,-70 1150,-105 1185,-105 1205,-60 1225,-50 1225,40 1185,60 1165,72 1150,65 1120,85 1135,95 1165,100 1140,125 1160,165 1155,200 1120,240 1085,258 1050,260 1010,250 985,258 960,255 948,235 948,200 930,185 905,195 860,195 795,175 780,165 785,125 740,100 730,75 745,65 790,55")],
  ["#2b5720", low("1040,278 1060,270 1050,292")], [G, low("1150,222 1157,235 1145,257 1140,240")],
  [G, low("1225,58 1185,75 1190,92 1225,95")],
  [G, low("945,285 965,272 985,290 1005,290 1020,325 985,335 985,320 960,340 955,380 970,395 990,430 995,445 975,425 950,365 958,345 945,310")],
  [G, low("985,258 1010,250 1025,265 1010,285 1045,330 1040,360 1010,375 1000,355 1025,345 1020,310 990,280")], [G, low("985,335 1020,325 1025,345 1000,355")],
  [R, low("920,405 945,415 1010,480 1015,510 985,490 945,440")], [R, low("1015,512 1050,515 1100,525 1090,532 1050,525 1015,520")], [G, low("1110,528 1130,530 1125,535")], [G, low("1165,545 1190,535 1170,552")],
  [R, low("1045,445 1065,440 1100,430 1120,395 1130,410 1115,430 1105,485 1060,480 1045,465")],
  [G, low("1135,440 1150,455 1170,430 1155,465 1172,500 1155,495 1145,510 1135,480")],
  [G, low("1148,290 1160,292 1158,320 1165,330 1145,322")], [G, low("1170,382 1195,372 1197,400 1180,395")], [G, low("1165,345 1185,350 1190,365 1170,365")], [G, low("1135,362 1115,388 1130,370")], [G, low("1205,440 1212,440 1210,460")], [G, low("1195,465 1215,468 1205,475")],
  [G, low("898,335 902,340 900,360")],
  [G, low("1225,590 1200,580 1170,610 1155,630 1090,655 1080,690 1095,730 1100,770 1115,787 1170,770 1190,757 1225,755")],
  [G, low("27,155 62,120 62,150 27,178")],
  [G, low("62,120 100,108 155,102 152,130 168,165 165,190 168,240 180,243 120,280 105,283 27,228 27,178 62,150")],
  [G, low("165,190 175,160 178,150 215,150 240,168 262,172 258,158 285,148 298,155 298,275 290,275 215,240 180,243 168,240")],
  [G, low("298,155 335,165 375,158 390,170 383,185 365,180 385,210 400,235 400,256 298,256")],
  [G, low("108,338 140,332 170,338 205,335 212,350 190,380 180,395 160,400 155,412 130,410 103,398 103,370")],
  ["#7cc66f", low("205,335 212,350 208,365 215,385 210,405 220,438 165,432 158,405 185,395 195,370")],
  ["#7cc66f", low("165,440 175,437 175,448 205,440 205,470 185,475 182,490 158,465")],
  [G, low("30,358 55,325 80,325 98,345 70,352 62,365")],
  [G, low("390,340 410,325 440,330 460,355 475,375 503,385 480,410 440,420 400,410 372,385 388,360")],
  [G, low("460,355 495,352 532,348 525,385 490,430 443,468 440,420 480,410 503,385 475,375")],
  [G, low("385,425 400,410 440,420 443,468 425,495 388,470 375,462 388,440")],
  [G, low("350,435 385,425 388,440 375,462 345,468 355,445")],
  [G, low("345,468 375,462 388,470 425,495 425,520 437,555 385,560 372,540 345,530 340,490")],
  [G, low("272,575 275,560 330,568 332,530 345,530 372,540 375,560 370,580 345,590 310,618 272,610")],
  [G, low("262,620 300,618 322,655 300,690 268,702 257,690 257,655")],
  [G, low("222,715 250,720 257,690 268,702 300,690 340,655 358,660 360,695 370,700 350,735 320,765 280,772 245,784 235,750")],
];
const borders = ["27,283 115,285 110,315 60,330 27,335", "115,283 110,320", "215,245 215,325 195,333", "298,275 290,320 275,340 280,365 215,390", "290,365 300,390 330,410 350,430", "375,350 360,370 300,370", "185,610 240,612 290,618", "220,510 225,525 268,520 275,560", "180,495 215,495 220,460", "220,438 230,410 310,415", "400,256 415,300 390,345", "310,618 335,600 365,605 370,635 350,655 325,655", "375,545 385,590 395,605", "90,350 90,400", "60,360 50,405", "253,655 257,620", "205,240 205,250"].map(low);
/* A bar in a label switches between letters over bare ground or sea and letters under a filled country. */
const mapLabels = [
  [1000, 567, "|Russia"], [250, 535, "|Sweden"], [310, 606, "F|inland"], [160, 633, "N|orway"], [325, 766, "|Belarus"], [165, 793, "G|ermany"], [360, 820, "|Ukraine"], [95, 858, "|France"],
  [695, 828, "Kazakhstan"], [986, 859, "Mongolia"], [55, 931, "|Spain"], [380, 949, "|Turkey"], [457, 1010, "|Iraq"], [555, 1011, "|Iran"], [668, 1065, "|Pakistan"], [100, 1061, "|Algeria"],
  [233, 1074, "|Libya"], [334, 1086, "|Egypt"], [470, 1086, "|Saudi"], [470, 1122, "|Arabia"], [339, 1185, "Sudan"], [503, 1187, "Yemen"], [770, 1119, "|India"],
  [288, 1302, "Democratic"], [285, 1339, "Republic"], [285, 1375, "of Congo"], [1088, 1333, "In|done|sia"], [283, 1603, "|South"], [285, 1640, "|Africa"], [1206, 1550, "|A"],
];
const fjords = "M245 440l-12 25 18-5-30 22M270 430l-8 22 14-3M290 420l-4 18 18-8 4 14M320 420l-8 20M195 480l18 6M205 465l15 8M190 495l16 4M192 530l12-6M180 560l14-4M165 580l14 2M130 620l16-4M120 650l14 4M235 445l16 4M255 430l12 8M300 420l8 14M335 425l-6 12M835 325l10-20 5 15-12-5M855 300l-20 10M880 280l-15 12M920 250l12-12-4-16 12 8M1020 170l10 6M865 215l5 5M755 105l8 10M740 350l12 4M800 265l14 4M805 285l3 8M55 670l8-14M270 990l18 8M285 970l15-5M290 955l14 12M300 945l12 14M295 980l20 4M1112 1258l42-56M1160 1198l22 26M1172 1212l18 20M1158 1215l14 10M1180 1200l8 18M1130 1335l8 40M1170 1320l14 2M945 1315l40 56M958 1345l20 22M1100 1400l60 4M1150 1410l20-6M1185 1395l16-6";
const WorldMap = () => (
  <svg width="396" height="575" viewBox="0 0 396 575" role="img" aria-label="Population map">
    <rect width="396" height="575" fill="#74cff0" />
    <g transform="scale(.333333) translate(-27 -39)" strokeLinejoin="round">
      {bare.map(([c, p], i) => <path key={i} d={coast(p)} fill={c} />)}
      {borders.map((p, i) => <polyline key={i} points={p} fill="none" stroke="#aaa6a4" strokeWidth="2.500" />)}
      {lands.map(([c, p], i) => <path key={i} d={coast(p)} fill={c} stroke="#666b66" strokeWidth="3" />)}
      <path d={coast(low("925,15 950,30 1000,40 1060,35 1060,20 1010,5 960,10"))} fill={SAND} />
      <path d={coast("512,870 525,850 550,855 548,880 530,890 535,920 555,930 552,965 530,975 515,950 500,925 495,890")} fill="#74cff0" />
      <path d={coast("335,890 350,868 385,890 400,872 420,885 450,915 440,925 380,915 345,930 322,920")} fill="#74cff0" stroke="#666b66" strokeWidth="2" />
      <path d="M728 872q10-14 28-12l22-4v8l-20 2-25 12zM815 835l12-14 6 4-8 16zM70 1245l12-5 2 28-10 8zM380 1420l8 30-8-5z" fill="#74cff0" />
      <path d="M985 310l-8-12-14 18 8 16 40-30zM385 605l14 10 2 28-14-4zM325 630l30-12 12 30-40 10zM850 500l14-22 4 12-12 18zM410 670l12 22-8-4zM985 720l12 30-4 40-12-20zM1010 785l40-55-6 30zM815 420l10 30-8-4zM375 1320l28-20-10 30zM360 1120l12-14-4 16z" fill="#84cc9b" />
      <path d={coast(low("318,735 330,722 340,728 325,742"))} fill={CREAM} stroke="#666b66" strokeWidth="2" />
      <path d={coast("228,830 270,822 275,830 235,842")} fill={CREAM} /><path d={coast("320,840 330,838 342,862 332,865")} fill={SAND} />
      <path d={fjords} fill="none" stroke="#666b66" strokeWidth="3" />
    </g>
    {mapLabels.map(([x, y, t]) => (
      <MapText key={t} x={Math.round((x - 27) / 3)} y={Math.round((y - 39) / 3)}>
        {t.split("|").map((part, i) => part && <MapLetters key={i} $faint={i % 2 === 1}>{part}</MapLetters>)}
      </MapText>
    ))}
    <MapText x="310" y="318">China</MapText>
  </svg>
);

/* ---------- regions ---------- */
const TopBars = () => (
  <>
    <TitleBar>
      <TableauMark size={17} blue boxed />
      <TitleText>Tableau - TaableauCa3</TitleText>
      <WindowButton aria-label="Minimise"><Ico w={12} h={12} stroke="#000" sw={1}><path d="M0 6.500h12" /></Ico></WindowButton>
      <WindowButton aria-label="Restore"><Ico w={13} h={13} stroke="#000" sw={1}><path d="M.5 3.500h9v9h-9zM3.500 3.500v-3h9v9h-3" /></Ico></WindowButton>
      <WindowButton aria-label="Close"><Ico w={13} h={13} stroke="#000" sw={1.1}><path d="m.5.500 12 12M12.500.500l-12 12" /></Ico></WindowButton>
    </TitleBar>
    <MenuBar>
      {["File", "Data", "Worksheet", "Dashboard", "Story", "Analysis", "Map", "Format", "Server", "Window", "Help"].map((m) => <MenuItem key={m}>{m}</MenuItem>)}
    </MenuBar>
    <Toolbar>
      <Tool aria-label="Start page"><TableauMark size={19} /></Tool>
      <Separator $before={9} />
      <Tool aria-label="Undo">{icons.back}</Tool>
      <Tool $off aria-label="Redo">{icons.forward}</Tool>
      <Tool aria-label="Replay">{icons.redo}</Tool><CaretButton aria-label="Replay options"><Down /></CaretButton>
      <Tool aria-label="Save">{icons.save}</Tool>
      <Tool aria-label="New data source">{icons.dbPlus}</Tool>
      <Tool aria-label="Pause updates">{icons.dbPause}</Tool><CaretButton aria-label="Pause options"><Down /></CaretButton>
      <Tool $off aria-label="Refresh">{icons.refresh}</Tool><CaretButton $off aria-label="Refresh options"><Down /></CaretButton>
      <Separator $before={8} />
      <Tool aria-label="New worksheet">{icons.newSheet}</Tool><CaretButton aria-label="New worksheet options"><Down /></CaretButton>
      <Tool aria-label="Duplicate">{icons.dup}</Tool>
      <Tool aria-label="Clear sheet">{icons.clear}</Tool><CaretButton aria-label="Clear options"><Down /></CaretButton>
      <Separator $before={6} />
      <Tool aria-label="Swap">{icons.swap}</Tool>
      <Tool $off aria-label="Sort ascending">{icons.sortAsc}</Tool>
      <Tool $off aria-label="Sort descending">{icons.sortDesc}</Tool>
      <Separator $before={13} />
      <Tool aria-label="Highlight">{icons.marker}</Tool><CaretButton aria-label="Highlight options"><Down /></CaretButton>
      <Tool $off aria-label="Group">{icons.clip}</Tool><CaretButton $off aria-label="Group options"><Down /></CaretButton>
      <Tool aria-label="Show labels">{icons.text}</Tool>
      <Tool $on aria-label="Fix axes">{icons.pin}</Tool>
      <SelectShell $width={127} $left={10} $inset={8}><FitSelect aria-label="Fit" /><Down s={8} color="#c8c8c8" /></SelectShell>
      <Separator $before={17} />
      <Tool aria-label="Show cards">{icons.cards}</Tool><CaretButton aria-label="Card options"><Down /></CaretButton>
      <Tool aria-label="Presentation mode">{icons.present}</Tool>
      <Separator $before={8} />
      <Tool aria-label="Share">{icons.share}</Tool>
      <Spacer />
      <Tool aria-label="Guide">{icons.sign}</Tool>
      <ShowMe>
        <svg width="14" height="16" viewBox="0 0 14 16" aria-hidden="true"><path fill="#8a7199" d="M0 0h11v3H0z" /><path fill="#7fa8d1" d="M0 4h14v3H0z" /><path fill="#f2a67a" d="M0 8h5v3H0z" /><path fill="#f56f7c" d="M0 12h8v3H0z" /></svg>
        Show Me
      </ShowMe>
    </Toolbar>
  </>
);

const SidePane = () => (
  <Side>
    <SideTabs>
      <SideTab $active>Dashboard</SideTab>
      <SideTab>Layout<Ico w={7} h={11}><path d="M6 1 1.500 5.500 6 10" /></Ico></SideTab>
    </SideTabs>
    <Devices>
      <Device $active>Default</Device>
      <Device $child>Phone</Device>
      <Preview>Device Preview</Preview>
    </Devices>
    <SizeBox>
      <Heading>Size</Heading>
      <SelectShell $inset={1}>
        <SizeSelect aria-label="Dashboard size"><option>A4 Landscape (1169 x 827)</option></SizeSelect>
        <Down s={8} color="#555" />
      </SelectShell>
    </SizeBox>
    <Sheets>
      <Heading>Sheets</Heading>
      {[3, 4, 5, 6, 7, 8].map((n) => <SheetRow key={n} $hover={n === 4}><SheetIcon used={n !== 8} />Sheet {n}</SheetRow>)}
    </Sheets>
    <Objects>
      <Heading>Objects</Heading>
      <ObjectPane>
        <ObjectList>
          {Object.entries(objectIcons).map(([name, icon], i) => <ObjectItem key={name} $active={i === 0}>{icon}{name}</ObjectItem>)}
        </ObjectList>
        <VScroll>
          <button aria-label="Scroll up"><Ico w={8} h={4}><path d="M0 4h8L4 0z" fill="#a3a3a3" stroke="none" /></Ico></button>
          <span />
          <button aria-label="Scroll down"><Ico w={8} h={4}><path d="M0 0h8L4 4z" fill="#444" stroke="none" /></Ico></button>
        </VScroll>
      </ObjectPane>
      <Modes><Mode $active>Tiled</Mode><Mode>Floating</Mode></Modes>
      <CheckRow><input type="checkbox" />Show dashboard title</CheckRow>
    </Objects>
  </Side>
);

const Dashboard = () => (
  <Page>
    <Frame>
      <Columns>
        <Column>
          <Tile $h={66} $edge="left" $framed $top $pad={19} $right={24}><Title $dark>Literacy</Title></Tile>
          <Tile $h={306} $edge="left"><LiteracyChart /></Tile>
          <Tile $h={105} $edge="left" $framed $pad={59}><Title $dark>Urban Area</Title></Tile>
          <Tile $h={319} $edge="left"><UrbanChart /></Tile>
        </Column>
        <Column>
          <Middle>
            <Headline>World Analysis</Headline>
            <Subtitle>Interactive Dashboard</Subtitle>
            <MapTile>
              <WorldMap />
              <Credit>© Mapbox © OSM</Credit>
              <Grip />
              <MapTools>
                <button aria-label="Remove"><Ico w={12} h={12} sw={1.600}><path d="m1 1 10 10M11 1 1 11" /></Ico></button>
                <button aria-label="Go to sheet"><Ico w={12} h={12} sw={1.400}><path d="M5 2.500H1v9h8.500V7M4.500 8 11 1M7 1h4v4" /></Ico></button>
                <button aria-label="Use as filter"><Ico w={14} h={14}><path d="M0 1h14L8.500 7v7l-3-2V7z" fill="#fff" stroke="none" /></Ico></button>
                <button aria-label="More options"><Down s={8} color="#fff" /></button>
              </MapTools>
            </MapTile>
          </Middle>
        </Column>
        <Column>
          <Tile $h={49} $edge="right" $framed $top $pad={2}><Title>Density</Title></Tile>
          <Tile $h={308} $edge="right">
            <DensityChart />
            <HScroll>
              <button aria-label="Scroll left"><Ico w={8} h={11} sw={2}><path d="M7 1 2 5.500 7 10" /></Ico></button>
              <span />
              <button aria-label="Scroll right"><Ico w={8} h={11} sw={2}><path d="m1 1 5 4.500L1 10" /></Ico></button>
            </HScroll>
          </Tile>
          <Tile $h={137} $edge="right" $framed $pad={7}>
            <FilterLabel htmlFor="country">Country</FilterLabel>
            <FilterShell $inset={8}><FilterSelect id="country"><option>(All)</option></FilterSelect><Down color="#222" s={7} /></FilterShell>
            <Title>Population Increment</Title>
          </Tile>
          <Tile $h={303} $edge="right"><PopulationChart /></Tile>
        </Column>
      </Columns>
    </Frame>
  </Page>
);

const PlusIcon = ({ d }) => <Ico w={17} h={17} sw={1.200}><path d={d} /><path d="M9.500 13h7M13 9.500v7" strokeWidth="1.600" /></Ico>;
const BottomTabs = () => (
  <>
    <SheetTabs>
      <SheetTab $w={163} $start><Ico w={10} h={12} sw={1.200}><ellipse cx="5" cy="2.500" rx="4" ry="1.800" /><path d="M1 2.500V10c0 2 8 2 8 0V2.500" /></Ico>Data Source</SheetTab>
      {[3, 4, 5, 6, 7].map((n) => <SheetTab key={n} $w={71}>Sheet {n}</SheetTab>)}
      <SheetTab $w={126} $active><Ico w={12} h={12} sw={1.200}><path d="M1 1h10v10H1zM5 1v10M1 6h10" /></Ico>Dashboard 1</SheetTab>
      <SheetTab $w={71}>Sheet 8</SheetTab>
      <SheetTab $w={32} aria-label="New worksheet"><PlusIcon d="M8 12.500H1.500v-11h11V8M4.500 10V7M7 10V4.500M9.500 9V6" /></SheetTab>
      <SheetTab $w={32} aria-label="New dashboard"><PlusIcon d="M8 12.500H1.500v-11h11V8M6 1.500v11M1.500 6.500h11" /></SheetTab>
      <SheetTab $w={32} aria-label="New story"><PlusIcon d="M7 3.500C5.500 2 3.500 1.500 1.500 1.500v10c2 0 4 0 5.500 1.500V3.500c1.500-1.500 3.500-2 5.500-2V8" /></SheetTab>
    </SheetTabs>
    <Status>
      <StatusText>109 marks</StatusText><StatusText>1 row by 1 column</StatusText><StatusText>SUM(Populatn): 5,201,903</StatusText>
      <Spacer />
      <StatusCell $w={157} /><StatusCell $w={32} /><StatusCell $w={32} /><StatusCell $w={57} />
      <StatusCell $w={71}>
        <Ico w={8} h={8}><path d="M1 0v8" /><path d="M7 0v8L2 4z" fill="currentColor" stroke="none" /></Ico>
        <Ico w={8} h={8}><path d="M6 0v8L1 4z" fill="currentColor" stroke="none" /></Ico>
        <Ico w={8} h={8}><path d="M2 0v8l5-4z" fill="currentColor" stroke="none" /></Ico>
        <Ico w={8} h={8}><path d="M7 0v8" /><path d="M1 0v8l5-4z" fill="currentColor" stroke="none" /></Ico>
      </StatusCell>
      <StatusCell $w={70} $gap={10}>
        <Ico w={12} h={10} stroke="none" fill="#bbb"><path d="M0 0h3v4H0zM4 0h3v4H4zM8 0h3v4H8zM0 6h3v4H0zM4 6h3v4H4zM8 6h3v4H8z" /></Ico>
        <Ico w={12} h={10} stroke="none" fill="#bbb"><path d="M0 0h12v6H0zM0 7h3v3H0zM4 7h3v3H4zM8 7h3v3H8z" /></Ico>
        <Ico w={12} h={10} stroke="none" fill="#666"><path d="M0 0h12v10H0z" /></Ico>
      </StatusCell>
    </Status>
  </>
);

const taskApps = [
  ["Store", 0, <svg width="30" height="30" viewBox="0 0 30 30"><path d="M10 8V3h10v5" fill="none" stroke="#39b8f0" strokeWidth="2" /><rect x="1" y="7" width="28" height="22" rx="3" fill="#17508c" /><path fill="#f25022" d="M9 12h5v5H9z" /><path fill="#7fba00" d="M16 12h5v5h-5z" /><path fill="#00a4ef" d="M9 19h5v5H9z" /><path fill="#ffb900" d="M16 19h5v5h-5z" /></svg>],
  ["Mail", 0, <svg width="32" height="28" viewBox="0 0 32 28"><path d="M1 9 16 0l15 9v18H1z" fill="#0f5ea8" /><path d="m4 9 12-1 12 1-12 10z" fill="#fff" /><path d="m1 9 15 11L31 9v18H1z" fill="#2a9df0" /><path d="M1 9v18L16 20z" fill="#1180d8" /><path d="m1 27 15-9 15 9z" fill="#1b8ee4" /></svg>],
  ["Brave", 0, <svg width="27" height="31" viewBox="0 0 27 31"><path d="m7 1-4 4-2 5 3 13 9.500 7.500L23 23l3-13-2-5-4-4z" fill="#fb542b" /><path d="m8 6-3 4 3 7 2 5 3.500 3.500L17 22l2-5 3-7-3-4-5.500 1.500z" fill="#fff" /><path d="m9 12 3 1.500-1 3 2.500 2 2.500-2-1-3 3-1.500M13.500 18v4" stroke="#fb542b" strokeWidth="1.600" fill="none" /></svg>],
  ["Valorant", 0, <svg width="28" height="28" viewBox="0 0 28 28"><rect width="28" height="28" fill="#ff4655" /><path d="M6 9v5l6 7h4zM22 9v5l-3 3h-4z" fill="#fff" /></svg>],
  ["Explorer", 1, <svg width="28" height="26" viewBox="0 0 28 26"><path d="M0 2h10l3 3h15v6H0z" fill="#e5a50f" /><path d="M0 7h28v17H0z" fill="#fdd663" /><path d="M5 25V15h18v10h-5v-5h-8v5z" fill="#3a8fd9" /></svg>],
  ["YouTube", 0, <svg width="31" height="22" viewBox="0 0 31 22"><rect width="31" height="22" rx="5" fill="#f00" /><path d="m12 6 9 5-9 5z" fill="#fff" /></svg>],
  ["Facebook", 0, <svg width="30" height="30" viewBox="0 0 30 30"><circle cx="15" cy="15" r="15" fill="#0c7df0" /><path d="M13 30V19H9.500v-4.500H13V11c0-4 2.500-5.500 7-5v4c-2.500-.2-3 .5-3 2v2.500h3.500l-.8 4.500H17v11z" fill="#fff" /></svg>],
  ["Edge", 0, <svg width="31" height="31" viewBox="0 0 31 31"><circle cx="15.500" cy="15.500" r="15" fill="#1673c9" /><path d="M1 14C3-3 30-4 30.500 13c0 5-5 7-10 5.500 2-7-9-10-19.500-4.500z" fill="#38c1b0" /><path d="M20 1c8 1 11 8 10.500 13-1 4-6 5.500-10 4.500 2-5-1-10-5-12z" fill="#62d45d" /><path d="M11 14c-4 7 2 15 10 14 4-.5 6-3 7-5-6 3-15 1-13-8z" fill="#eeeeef" opacity=".9" /><path d="M11 14c-4 8 1 15 8 15-9 4-20-5-17.500-14C4 11 9 10 11 14z" fill="#0f5cad" /></svg>],
  ["PyCharm", 1, <svg width="31" height="31" viewBox="0 0 31 31"><path d="m0 8 10-8 9 5 12-3-3 25-15 4L2 26z" fill="#21d789" /><path d="m19 5 9 4 3 9-5 6z" fill="#fcf84a" /><path d="m23 12 8 8-6 8z" fill="#07c3f2" /><path d="M6 6h19v19H6z" fill="#000" /><path d="M8 22h7" stroke="#fff" strokeWidth="1.500" /><text x="7.500" y="15" fill="#fff" fontFamily="Liberation Sans, sans-serif" fontWeight="700" fontSize="10">PC</text></svg>],
  ["Chrome", 1, <svg width="32" height="32" viewBox="0 0 32 32"><circle cx="16" cy="15" r="15" fill="#34a853" /><path d="M16 0a15 15 0 0 1 13 7.500H16L9.500 19 3 7.500A15 15 0 0 1 16 0z" fill="#ea4335" /><path d="M29 7.500A15 15 0 0 1 15 30l7.500-11.500L22 7.500z" fill="#fbbc04" /><circle cx="16" cy="15" r="7" fill="#fff" /><circle cx="16" cy="15" r="5.500" fill="#4285f4" /><circle cx="22" cy="23" r="8.500" fill="#8b7f78" /><path d="M19 19h6M22 19v9" stroke="#ddd" strokeWidth="1.600" /></svg>],
  ["Tableau", 2, <TableauMark size={27} blue boxed />],
];
const TaskbarView = () => (
  <Taskbar>
    <StartButton aria-label="Start"><svg width="21" height="21" viewBox="0 0 21 21"><path d="M0 3 9 1.700V10H0zM10 1.500 21 0v10H10zM0 11h9v8.300L0 18zM10 11h11v10l-11-1.500z" /></svg></StartButton>
    <Search>
      <Ico w={20} h={22} sw={1.600} stroke="#111"><circle cx="12.500" cy="7.500" r="6.500" /><path d="M8 12.500 1 21" /></Ico>
      <input placeholder="Type here to search" aria-label="Type here to search" />
    </Search>
    <TaskApp aria-label="Task view"><Ico w={22} h={20} sw={1.500} stroke="#222"><path d="M1 1v3h12V1M1 8h12v5H1zM1 20v-3h12v3M18 0v20" /><path d="M16.500 6h4" strokeWidth="3" /></Ico></TaskApp>
    {taskApps.map(([n, s, icon]) => <TaskApp key={n} aria-label={n} $open={s > 0} $active={s === 2}>{icon}</TaskApp>)}
    <Spacer />
    <Tray>
      <Weather>
        <svg width="26" height="26" viewBox="0 0 26 26"><defs><linearGradient id="sun" x1="0" y1="0" x2="1" y2="1"><stop offset="0" stopColor="#fbb52b" /><stop offset="1" stopColor="#ee7a12" /></linearGradient></defs><circle cx="13" cy="13" r="12.500" fill="url(#sun)" /></svg>
        {"20°C  Sunny"}
      </Weather>
      <TrayButton aria-label="Hidden icons"><Ico w={16} h={10} stroke="#111" sw={1.500}><path d="m1 9 7-7 7 7" /></Ico></TrayButton>
      <TrayButton aria-label="OneDrive"><Ico w={22} h={18} stroke="none"><path d="M5 12a4 4 0 0 1 0-8 6 6 0 0 1 11-1 5 5 0 0 1 3 9z" fill="#666" stroke="#333" /><circle cx="14" cy="12" r="6" fill="#fff" /><path d="M10 12a4 4 0 0 1 7-2.500M18 12a4 4 0 0 1-7 2.500" stroke="#0078d7" strokeWidth="1.600" /></Ico></TrayButton>
      <TrayButton aria-label="Battery"><Ico w={20} h={16} stroke="#111"><path d="M5 4.500h13v9H4M19 7v4" /><path d="M7 6.500h9.500v5H7z" fill="#111" /><path d="M1 1v4h4V1M3 5v8" strokeWidth="1.600" /></Ico></TrayButton>
      <TrayButton aria-label="Volume"><Ico w={20} h={16} stroke="#111"><path d="M1 5.500h3L9 1v14l-5-4.500H1zM12.500 5l6 6M18.500 5l-6 6" /></Ico></TrayButton>
      <TrayButton aria-label="Network"><Ico w={22} h={22} stroke="#111"><circle cx="10.500" cy="10.500" r="9.500" /><ellipse cx="10.500" cy="10.500" rx="4.500" ry="9.500" /><path d="M2 7h17M2 14h17" /><circle cx="16.500" cy="16.500" r="4.500" fill="#eeeeef" /><path d="m13.500 13.500 6 6" /></Ico></TrayButton>
      <Lang>ENG</Lang>
      <Clock>21:53<br />16-11-2023</Clock>
      <TrayButton aria-label="Notifications"><Ico w={24} h={22} stroke="none"><path d="M1 1h19v15H12l-5 5v-5H1z" fill="#111" /><path d="M4 5h13M4 8.500h13M4 12h8" stroke="#eee" strokeWidth="1.300" /><circle cx="17" cy="15" r="5.500" fill="#111" stroke="#eee" /><path d="M19 17.500a3.500 3.500 0 1 1-1.500-5.500 3 3 0 0 0 1.500 5.500z" fill="#eee" /></Ico></TrayButton>
    </Tray>
  </Taskbar>
);

export default function App() {
  return (
    <Window>
      <GlobalStyle />
      <TopBars />
      <Body>
        <SidePane />
        <Workspace><Dashboard /></Workspace>
      </Body>
      <BottomTabs />
      <TaskbarView />
    </Window>
  );
}
